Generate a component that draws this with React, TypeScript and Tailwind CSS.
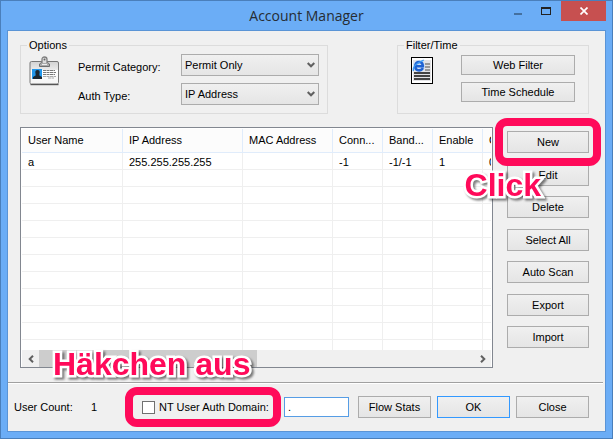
import { useState } from "react";
import clsx from "clsx";

const COLUMNS = [
  { title: "User Name", width: "w-[101px]" },
  { title: "IP Address", width: "w-[120px]" },
  { title: "MAC Address", width: "w-[90px]" },
  { title: "Conn...", width: "w-[50px]" },
  { title: "Band...", width: "w-[50px]" },
  { title: "Enable", width: "w-[50px]" },
  { title: "C", width: "w-auto" },
];

const USERS = [["a", "255.255.255.255", "", "-1", "-1/-1", "1", "0"]];

const EMPTY_ROWS = 11;

const ACTIONS = ["Edit", "Delete", "Select All", "Auto Scan", "Export", "Import"];

function Button(
  props: React.PropsWithChildren<{ className?: string; isDefault?: boolean }>
) {
  return (
    <button
      type="button"
      className={clsx(
        "border bg-linear-to-b from-[#f0f0f0] to-[#e5e5e5] text-center leading-4",
        props.isDefault ? "border-[#3399ff]" : "border-[#acacac]",
        props.className
      )}
    >
      {props.children}
    </button>
  );
}

function Group(
  props: React.PropsWithChildren<{ title: string; className?: string }>
) {
  return (
    <fieldset
      className={clsx("h-[77px] border border-[#dcdcdc]", props.className)}
    >
      <legend className="ml-[6px] px-[2px] leading-4">{props.title}</legend>
      {props.children}
    </fieldset>
  );
}

function SelectRow(props: { id: string; label: string; options: string[] }) {
  return (
    <div className="flex items-center">
      <label htmlFor={props.id} className="flex-1 pt-1 leading-4">
        {props.label}
      </label>
      <div className="relative">
        <select
          id={props.id}
          className="block h-[22px] w-[138px] appearance-none border border-[#acacac] bg-linear-to-b from-[#f0f0f0] to-[#e5e5e5] pl-[3px] leading-4"
        >
          {props.options.map((option) => (
            <option key={option}>{option}</option>
          ))}
        </select>
        <svg
          viewBox="0 0 8 6"
          className="pointer-events-none absolute top-2 right-1 h-[6px] w-2"
        >
          <path d="M.7 1 4 4.3 7.3 1" fill="none" stroke="#606060" strokeWidth="2" />
        </svg>
      </div>
    </div>
  );
}

function BadgeIcon() {
  return (
    <svg viewBox="0 0 31 30" className="h-[30px] w-[31px]">
      <defs>
        <linearGradient id="badge" x1="0" y1="0" x2="0" y2="1">
          <stop offset="0" stopColor="#d2d2d2" />
          <stop offset=".35" stopColor="#e9e9e9" />
          <stop offset=".4" stopColor="#fff" />
          <stop offset="1" stopColor="#f4f4f4" />
        </linearGradient>
      </defs>
      <rect x="1" y="5.5" width="28.5" height="22.5" rx="1.5" fill="url(#badge)" stroke="#777" />
      <path d="M1.5 28.6h28" stroke="#555" strokeWidth="1.2" />
      <rect x="3" y="13" width="10" height="10" fill="#2196ea" />
      <path d="M4 23v-2l2.600-1.400v-1.600q-1.100-4 1.900-4t1.900 4v1.600L13 21v2z" fill="#1c2731" />
      <g stroke="#777" strokeWidth="1.100" strokeDasharray="3 .5">
        <path d="M14 14.500h12M14 16.500h13M14 18.500h12" />
        <path d="M14 20.500h13M19 22h6" stroke="#aaa" />
      </g>
      <path d="M10.500 10.500V8l2-1.500h6l2 1.500v2.500z" fill="#aaa" stroke="#707070" />
      <path d="M13 7V3.500Q13 1 15.500 1T18 3.500V7" fill="#ddd" stroke="#808080" strokeWidth="1.300" />
      <circle cx="15.500" cy="3.500" r="1" fill="#666" />
      <path d="M13 8.500h5" stroke="#eee" />
    </svg>
  );
}

function WebPageIcon() {
  return (
    <svg viewBox="0 0 22 27" className="h-[27px] w-[22px]">
      <rect x=".5" y=".5" width="21" height="26" fill="#fff" stroke="#000" />
      <rect x="2" y="3" width="18" height="21" fill="#e3e3e6" />
      <g stroke="#444" strokeWidth="2">
        <path d="M14 7h5M14 10h5M14 13h5" stroke="#999" />
        <path d="M3 16h16M3 19h16M3 22h16" />
      </g>
      <circle cx="8" cy="9" r="6" fill="#c9dcf4" />
      <path
        d="M4.500 9.300h7.300Q11.800 5 8.300 5 4.300 5 4.300 9.200T8.200 13.400Q10.700 13.400 12 11.200"
        fill="none"
        stroke="#1f62d2"
        strokeWidth="2.600"
      />
      <path d="M2.300 14Q1 8 12.700 3.200" fill="none" stroke="#3b9af5" strokeWidth="1.400" />
    </svg>
  );
}

function Highlight({ className }: { className: string }) {
  return (
    <span
      className={clsx(
        "pointer-events-none absolute z-10 rounded-xl border-8 border-[#ff0a5a]",
        className
      )}
    />
  );
}

function Note(props: React.PropsWithChildren<{ className: string }>) {
  return (
    <span
      className={clsx(
        "pointer-events-none absolute z-20 text-[32px] leading-8 font-bold whitespace-nowrap text-[#ff0a5a]",
        "drop-shadow-[2px_2px_1px_rgba(0,0,0,0.5)] [-webkit-text-stroke:5px_white] [paint-order:stroke_fill] [stroke-linejoin:round]",
        props.className
      )}
    >
      {props.children}
    </span>
  );
}

function TitleBar() {
  return (
    <header className="relative flex h-[29px] items-start justify-end">
      <h1 className="absolute inset-x-0 top-[3px] text-center font-['Open_Sans',sans-serif] text-sm leading-6 text-[#262c33]">
        Account Manager
      </h1>
      <button type="button" aria-label="Minimize" className="relative flex h-5 w-6 justify-center pt-3">
        <span className="h-[2px] w-2 bg-[#44709f]" />
      </button>
      <button type="button" aria-label="Maximize" className="relative flex h-5 w-[31px] justify-center pt-[6px]">
        <span className="h-2 w-[10px] border border-t-2 border-[#222]" />
      </button>
      <button
        type="button"
        aria-label="Close window"
        className="relative flex h-5 w-[45px] items-center justify-center bg-[#c75050]"
      >
        <svg viewBox="0 0 8 8" className="size-2">
          <path d="M.5.5l7 7M7.500.5l-7 7" stroke="#fff" strokeWidth="1.700" />
        </svg>
      </button>
    </header>
  );
}

function UserList() {
  const rows = [
    ...USERS,
    ...Array.from({ length: EMPTY_ROWS }, () => COLUMNS.map(() => "")),
  ];

  return (
    <div className="min-w-0 flex-1 border border-[#828790] bg-white px-px pt-px">
      <div className="h-[221px] overflow-hidden">
        <table className="w-full table-fixed border-separate border-spacing-0 text-left">
          <thead>
            <tr>
              {COLUMNS.map((column) => (
                <th
                  key={column.title}
                  className={clsx(
                    "h-6 border-r border-b border-[#e0ecfb] bg-[#fcfcfc] p-0 pl-[6px] font-normal whitespace-nowrap last:border-r-0",
                    column.width
                  )}
                >
                  {column.title}
                </th>
              ))}
            </tr>
          </thead>
          <tbody>
            {rows.map((row, i) => (
              <tr key={i}>
                {row.map((cell, j) => (
                  <td
                    key={j}
                    className="h-[17px] border-r border-b border-[#efefef] p-0 pt-[2px] pl-[6px] leading-[14px] last:border-r-0"
                  >
                    {cell}
                  </td>
                ))}
              </tr>
            ))}
          </tbody>
        </table>
      </div>

      <div className="flex h-[17px] bg-[#f0f0f0]">
        <button type="button" aria-label="Scroll left" className="flex w-[17px] items-center justify-center">
          <svg viewBox="0 0 6 8" className="h-2 w-[6px]">
            <path d="M5 .7 1.700 4 5 7.300" fill="none" stroke="#606060" strokeWidth="2" />
          </svg>
        </button>
        <div className="flex-1">
          <div className="h-full w-1/2 bg-[#cdcdcd]" />
        </div>
        <button type="button" aria-label="Scroll right" className="flex w-[17px] items-center justify-center">
          <svg viewBox="0 0 6 8" className="h-2 w-[6px]">
            <path d="M1 .7 4.300 4 1 7.300" fill="none" stroke="#606060" strokeWidth="2" />
          </svg>
        </button>
      </div>
    </div>
  );
}

export default function App() {
  const [useDomain, setUseDomain] = useState(false);
  const [domain, setDomain] = useState(".");

  return (
    <div className="border border-[#4a7fbb] bg-[#6badf6] px-[6px] pb-[6px] font-['Liberation_Sans',sans-serif] text-[11px] text-black">
      <TitleBar />

      <main className="border border-[#5a94d6] bg-[#f0f0f0]">
        <div className="flex justify-between pt-[6px] pr-4 pl-3">
          <Group title="Options" className="w-[308px]">
            <div className="flex pt-px pr-2 pl-2">
              <div className="w-[49px] pt-[2px]">
                <BadgeIcon />
              </div>
              <div className="flex flex-1 flex-col gap-[7px]">
                <SelectRow id="category" label="Permit Category:" options={["Permit Only", "Deny Only"]} />
                <SelectRow id="auth" label="Auth Type:" options={["IP Address", "MAC Address"]} />
              </div>
            </div>
          </Group>

          <Group title="Filter/Time" className="w-[192px]">
            <div className="flex justify-between pt-px pr-[13px] pl-[13px]">
              <div className="pt-[3px]">
                <WebPageIcon />
              </div>
              <div className="flex flex-col gap-[7px] pt-px">
                <Button className="h-5 w-[114px]">Web Filter</Button>
                <Button className="h-5 w-[114px]">Time Schedule</Button>
              </div>
            </div>
          </Group>
        </div>

        <div className="flex gap-[14px] pt-[13px] pr-4 pb-[14px] pl-3">
          <UserList />

          <div className="flex w-[82px] flex-col justify-between pt-1 pb-5">
            <div className="relative flex">
              <Button className="h-[22px] flex-1">New</Button>
              <Highlight className="-inset-x-3 -inset-y-[13px]" />
              <Note className="top-[38px] right-12">Click</Note>
            </div>
            {ACTIONS.map((action) => (
              <Button key={action} className="h-[22px]">
                {action}
              </Button>
            ))}
          </div>
        </div>

        <hr className="mr-[2px] h-[2px] border-t border-b border-t-[#a0a0a0] border-b-white" />

        <footer className="flex items-center justify-between pt-3 pr-4 pb-[13px] pl-[6px]">
          <div className="flex items-center">
            <span className="w-[77px]">User Count:</span>
            <span className="w-[51px]">1</span>
            <label className="relative flex h-[22px] w-[134px] items-center gap-1">
              <input
                type="checkbox"
                checked={useDomain}
                onChange={(e) => setUseDomain(e.target.checked)}
                className="size-[13px] appearance-none border border-[#707070] bg-white checked:bg-[#707070]"
              />
              NT User Auth Domain:
              <Highlight className="-inset-y-[9px] -right-[5px] -left-[17px]" />
              <Note className="-top-12 -left-[89px]">Häkchen aus</Note>
            </label>
            <input
              aria-label="Domain"
              value={domain}
              onChange={(e) => setDomain(e.target.value)}
              className="ml-2 h-5 w-[65px] border border-[#569de5] bg-white px-[3px]"
            />
          </div>
          <div className="flex gap-[6px]">
            <Button className="h-[22px] w-[73px]">Flow Stats</Button>
            <Button className="h-[22px] w-[73px]" isDefault>
              OK
            </Button>
            <Button className="h-[22px] w-[73px]">Close</Button>
          </div>
        </footer>
      </main>
    </div>
  );
}
